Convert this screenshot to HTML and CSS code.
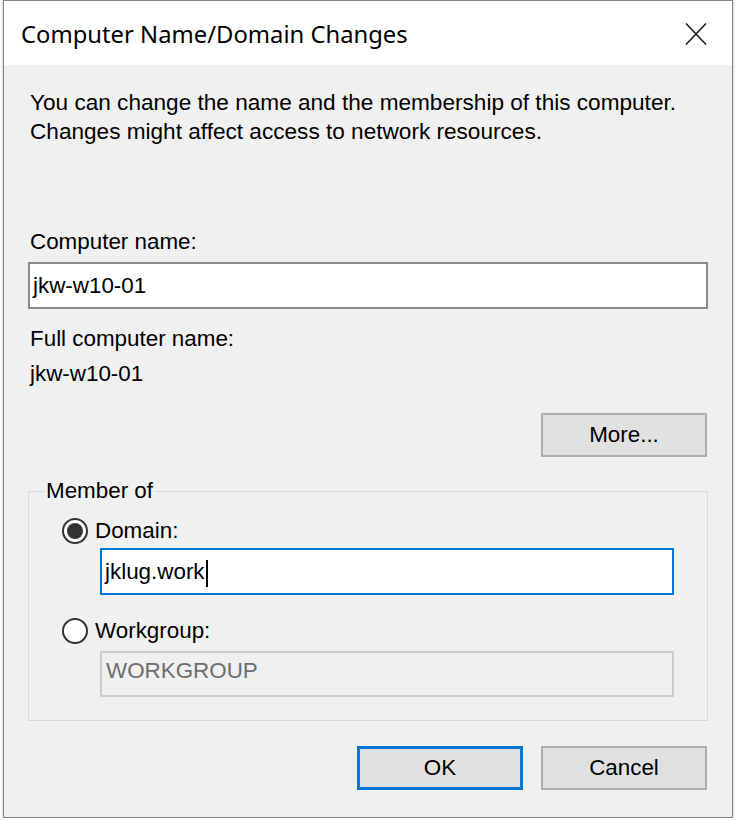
FILE: index.html
```html
<!DOCTYPE html>
<html lang="en">
<head>
    <meta charset="UTF-8">
    <title>Computer Name/Domain Changes</title>
    <link rel="stylesheet" href="styles.css">
</head>
<body>
    <div class="window">
        <div class="titlebar">
            <span class="title">Computer Name/Domain Changes</span>
            <span class="close">
                <svg width="24" height="22" viewBox="0 0 24 22">
                    <path d="M2 0.5 L22 21.5 M22 0.5 L2 21.5" stroke="#222" stroke-width="1.6" fill="none"/>
                </svg>
            </span>
        </div>
        <div class="content">
            <p class="intro">You can change the name and the membership of this computer.<br>Changes might affect access to network resources.</p>
            <div class="label name-label">Computer name:</div>
            <div class="textbox name-box">jkw-w10-01</div>
            <div class="label full-label">Full computer name:</div>
            <div class="label full-value">jkw-w10-01</div>
            <div class="button-row more-row">
                <div class="button">More...</div>
            </div>
            <fieldset class="group">
                <legend>Member of</legend>
                <div class="option domain-option"><span class="radio checked"></span>Domain:</div>
                <div class="textbox domain-box focused">jklug.work<span class="caret"></span></div>
                <div class="option workgroup-option"><span class="radio"></span>Workgroup:</div>
                <div class="textbox domain-box disabled">WORKGROUP</div>
            </fieldset>
            <div class="button-row actions">
                <div class="button default">OK</div>
                <div class="button">Cancel</div>
            </div>
        </div>
    </div>
</body>
</html>
```

FILE: styles.css
```css
body {
    margin: 0;
    background: #fff;
    font-family: "Liberation Sans", Arial, sans-serif;
    font-size: 22.4px;
    color: #000;
}
.window {
    margin-left: 3px;
    width: 730px;
    height: 818px;
    border: 1px solid #858585;
    box-shadow: 0 0 3px rgba(0, 0, 0, 0.25);
    box-sizing: border-box;
    background: #f0f0f0;
    display: flex;
    flex-direction: column;
}
.titlebar {
    height: 64px;
    background: #fff;
    display: flex;
    align-items: center;
    justify-content: space-between;
    padding: 2px 24px 0 17px;
    box-sizing: border-box;
}
.title {
    font-family: "Noto Sans", "Open Sans", sans-serif;
    font-size: 23.8px;
    color: #000;
}
.close {
    display: flex;
}
.content {
    flex: 1;
    padding: 0 24px;
}
.intro {
    margin: 23px 0 0 2px;
    line-height: 29px;
    font-size: 22.6px;
}
.label {
    line-height: 28px;
    padding-left: 2px;
}
.name-label {
    margin-top: 82px;
}
.full-label {
    margin-top: 16px;
}
.full-value {
    margin-top: 7px;
}
.textbox {
    height: 47px;
    line-height: 43px;
    border: 2px solid #8a8a8a;
    background: #fff;
    padding: 0 3px;
    box-sizing: border-box;
    white-space: nowrap;
}
.name-box {
    margin-top: 6px;
}
.button-row {
    display: flex;
    justify-content: flex-end;
    gap: 18px;
    padding-right: 1px;
}
.more-row {
    margin-top: 25px;
}
.actions {
    margin-top: 25px;
}
.button {
    width: 166px;
    height: 44px;
    line-height: 40px;
    text-align: center;
    background: #e1e1e1;
    border: 2px solid #adadad;
    box-sizing: border-box;
}
.button.default {
    border: 3px solid #0078d7;
    line-height: 38px;
}
.group {
    margin: 20px 0 0;
    padding: 12px 0 23px;
    border: 1px solid #dadada;
    min-width: 0;
}
.group legend {
    margin-left: 15px;
    padding: 0 2px;
    line-height: 28px;
}
.option {
    height: 28px;
    display: flex;
    align-items: center;
    margin-left: 33px;
}
.workgroup-option {
    margin-top: 22px;
}
.radio {
    width: 26px;
    height: 26px;
    border: 2px solid #333;
    border-radius: 50%;
    background: #fff;
    box-sizing: border-box;
    margin-right: 7px;
    display: flex;
    align-items: center;
    justify-content: center;
}
.radio.checked::after {
    content: "";
    width: 16px;
    height: 16px;
    border-radius: 50%;
    background: #333;
}
.domain-box {
    margin: 3px 0 0 71px;
    width: 574px;
}
.focused {
    border-color: #0078d7;
}
.caret {
    display: inline-block;
    width: 2px;
    height: 27px;
    background: #000;
    vertical-align: middle;
    margin-left: 1px;
}
.disabled {
    margin-top: 6px;
    height: 46px;
    line-height: 35px;
    background: #f0f0f0;
    border-color: #cccccc;
    color: #6d6d6d;
    padding-left: 4px;
}
```
